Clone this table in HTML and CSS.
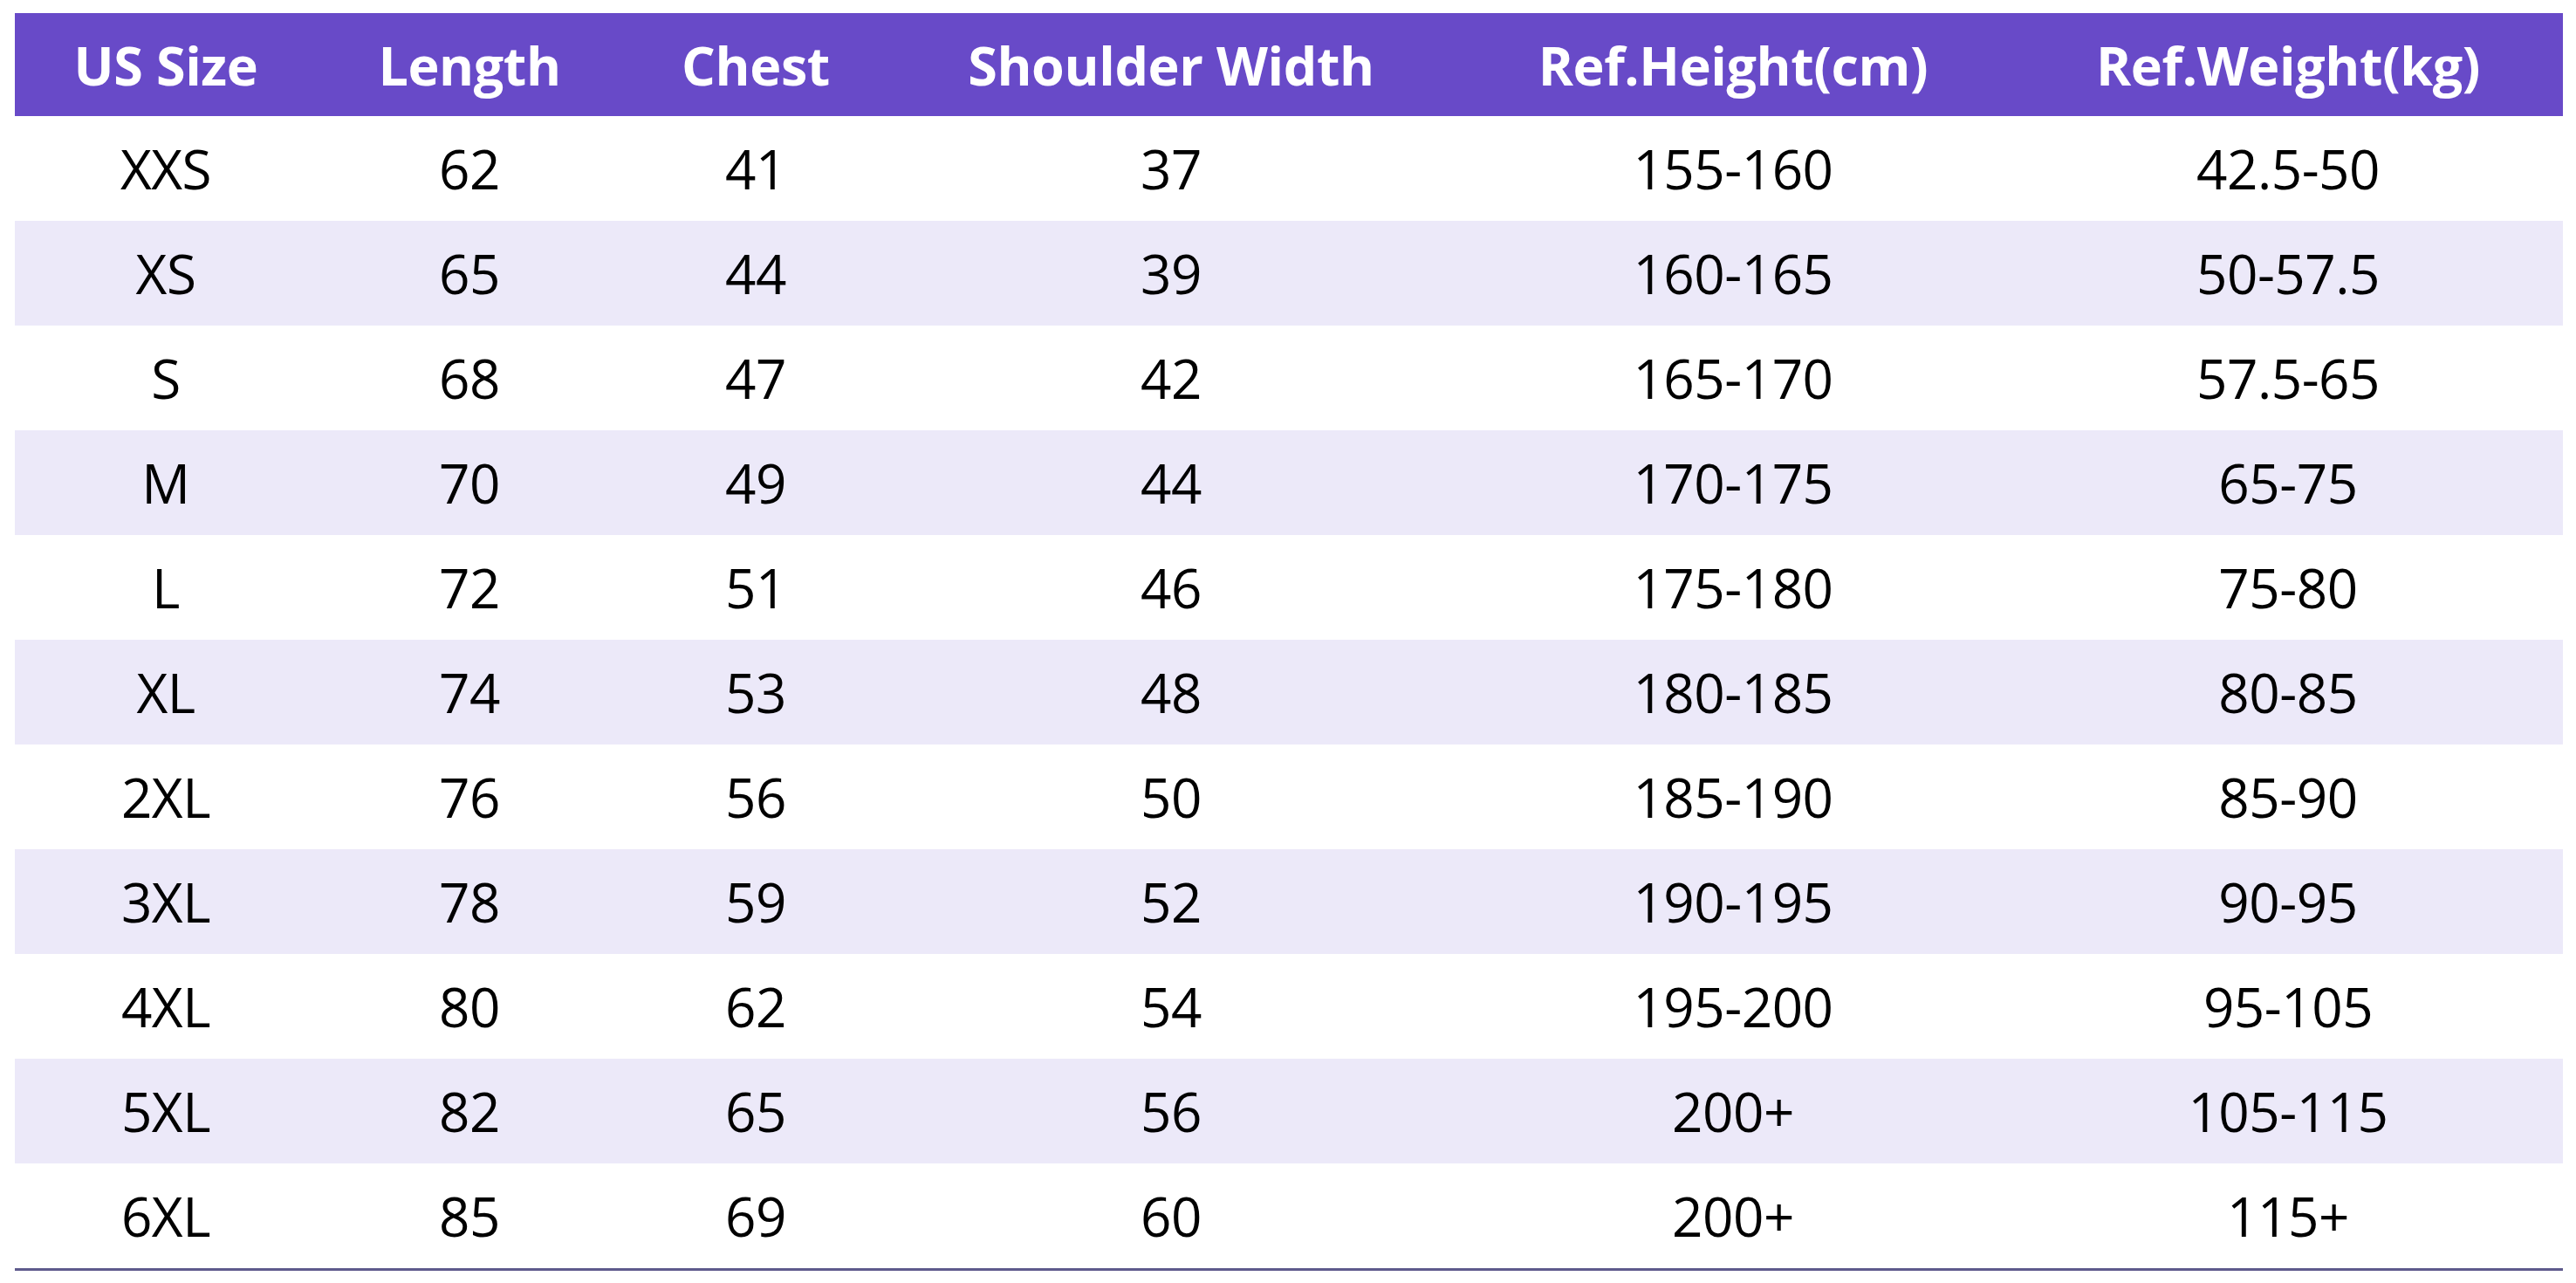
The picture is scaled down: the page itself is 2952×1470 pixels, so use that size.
FILE: index.html
```html
<!DOCTYPE html>
<html lang="en">
<head>
<meta charset="utf-8">
<title>Size Chart</title>
<link rel="stylesheet" href="styles.css">
</head>
<body>
<table class="size-table">
  <colgroup>
    <col class="c1"><col class="c2"><col class="c3"><col class="c4"><col class="c5"><col class="c6">
  </colgroup>
  <thead>
    <tr><th>US Size</th><th>Length</th><th>Chest</th><th>Shoulder Width</th><th>Ref.Height(cm)</th><th>Ref.Weight(kg)</th></tr>
  </thead>
  <tbody>
    <tr><td>XXS</td><td>62</td><td>41</td><td>37</td><td>155-160</td><td>42.5-50</td></tr>
    <tr><td>XS</td><td>65</td><td>44</td><td>39</td><td>160-165</td><td>50-57.5</td></tr>
    <tr><td>S</td><td>68</td><td>47</td><td>42</td><td>165-170</td><td>57.5-65</td></tr>
    <tr><td>M</td><td>70</td><td>49</td><td>44</td><td>170-175</td><td>65-75</td></tr>
    <tr><td>L</td><td>72</td><td>51</td><td>46</td><td>175-180</td><td>75-80</td></tr>
    <tr><td>XL</td><td>74</td><td>53</td><td>48</td><td>180-185</td><td>80-85</td></tr>
    <tr><td>2XL</td><td>76</td><td>56</td><td>50</td><td>185-190</td><td>85-90</td></tr>
    <tr><td>3XL</td><td>78</td><td>59</td><td>52</td><td>190-195</td><td>90-95</td></tr>
    <tr><td>4XL</td><td>80</td><td>62</td><td>54</td><td>195-200</td><td>95-105</td></tr>
    <tr><td>5XL</td><td>82</td><td>65</td><td>56</td><td>200+</td><td>105-115</td></tr>
    <tr><td>6XL</td><td>85</td><td>69</td><td>60</td><td>200+</td><td>115+</td></tr>
  </tbody>
</table>
</body>
</html>
```

FILE: styles.css
```css
html, body {
  margin: 0;
  padding: 0;
  background: #ffffff;
}
body {
  padding: 15px 0 0 17px;
  font-family: "Open Sans", "Noto Sans", "DejaVu Sans", sans-serif;
}
.size-table {
  width: 2920px;
  table-layout: fixed;
  border-collapse: collapse;
  border-bottom: 3px solid #5e5a8c;
}
.c1 { width: 346px; }
.c2 { width: 350px; }
.c3 { width: 306px; }
.c4 { width: 646px; }
.c5 { width: 642px; }
.c6 { width: 630px; }
.size-table th {
  background: #684ac8;
  color: #ffffff;
  font-weight: 700;
  font-size: 61px;
  height: 118px;
  padding: 0;
  text-align: center;
  vertical-align: middle;
  letter-spacing: -0.4px;
}
.size-table td {
  color: #000000;
  font-size: 62px;
  height: 120px;
  padding: 0;
  text-align: center;
  vertical-align: middle;
  letter-spacing: -0.5px;
}
.size-table tbody tr:nth-child(even) td {
  background: #ece9f9;
}
```
